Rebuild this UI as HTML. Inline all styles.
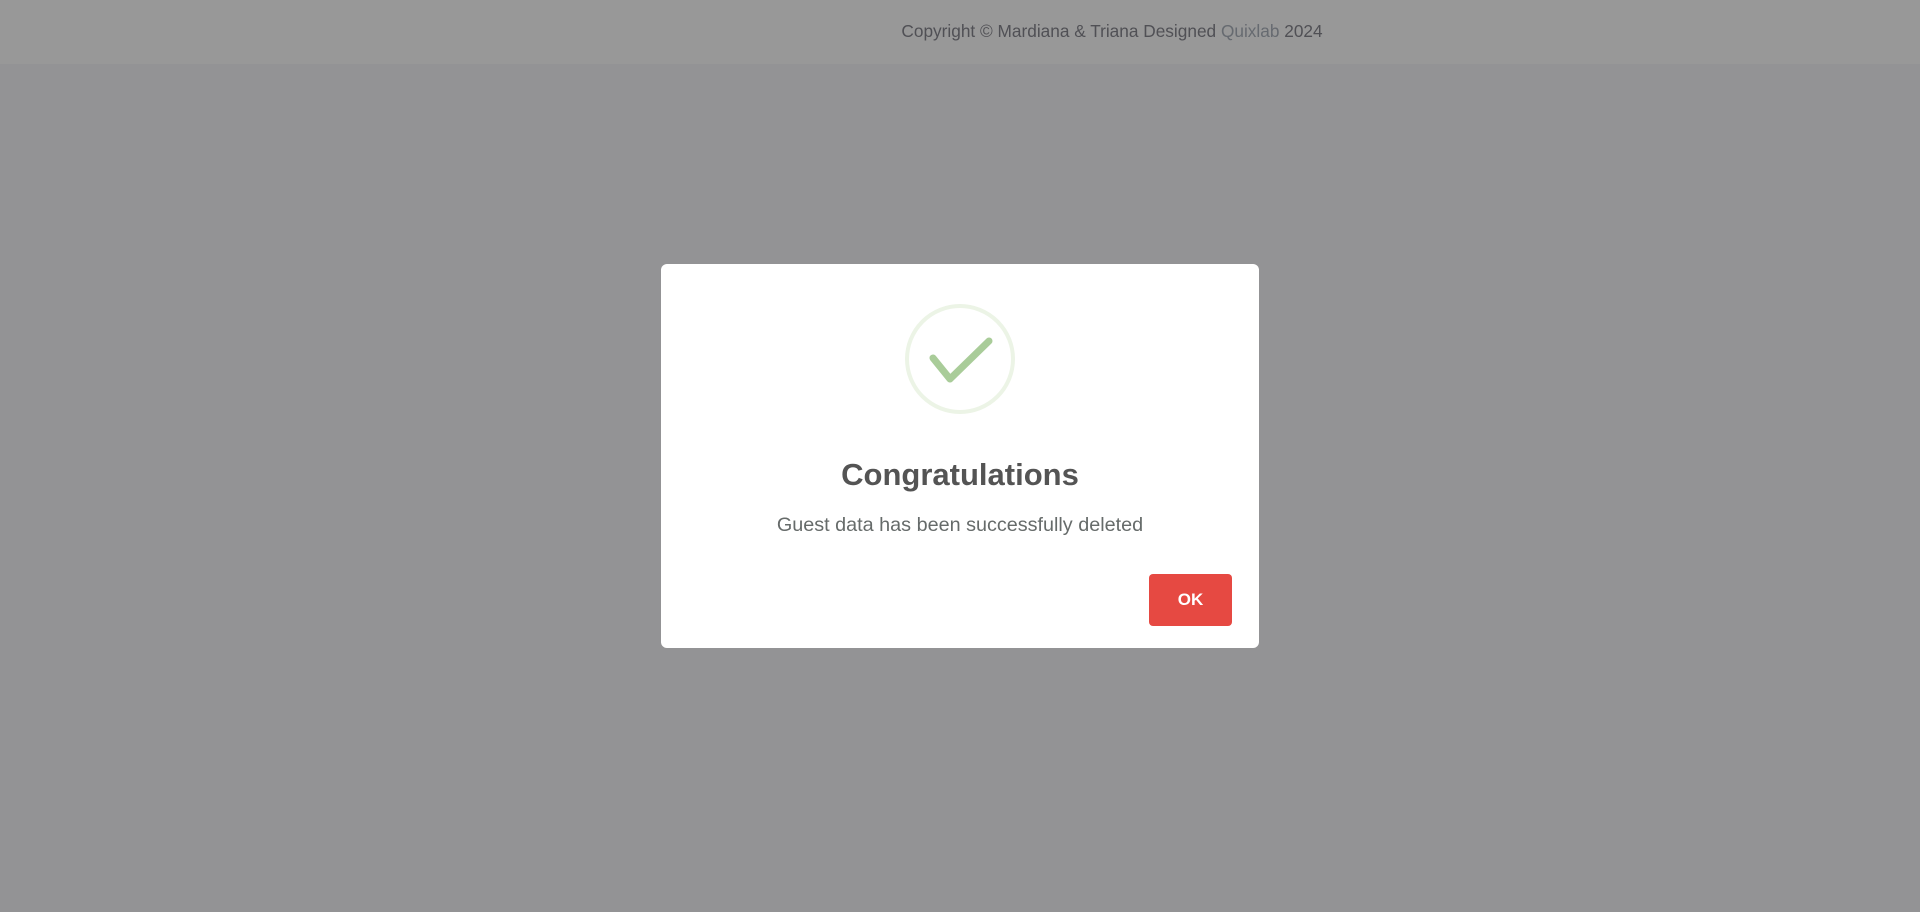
<!DOCTYPE html>
<html><head><style>
html,body{margin:0;padding:0;width:1920px;height:912px;overflow:hidden;background:#939395;font-family:"Liberation Sans",sans-serif;}
.top{position:absolute;left:0;top:0;width:1920px;height:64px;background:#989898;}
.top p{position:absolute;left:0;width:100%;margin:0;top:21px;text-align:center;padding-left:304px;box-sizing:border-box;font-size:17.25px;color:#505055;}
.top span{color:#666a70;}
.modal{position:absolute;left:661px;top:264px;width:598px;height:384px;background:#fff;border-radius:6px;}
.icon{position:absolute;left:244px;top:40px;width:102px;height:102px;border:4px solid #ecf4e6;border-radius:50%;}
h2{position:absolute;top:193px;left:0;width:100%;margin:0;text-align:center;font-size:31px;font-weight:bold;color:#545454;}
.msg{position:absolute;top:250px;left:0;width:100%;text-align:center;font-size:19.8px;color:#666b6a;}
.btn{position:absolute;left:488px;top:310px;width:83px;height:52px;background:#e64942;border-radius:4px;color:#fff;font-weight:bold;font-size:17px;text-align:center;line-height:52px;}
</style></head><body>
<div class="top"><p>Copyright © Mardiana &amp; Triana Designed <span>Quixlab</span> 2024</p></div>
<div class="modal">
<div class="icon"></div>
<svg style="position:absolute;left:244px;top:40px" width="110" height="110"><path d="M28 54 L45 75 L84 37" fill="none" stroke="#a9cc99" stroke-width="7" stroke-linecap="round" stroke-linejoin="round"/></svg>
<h2>Congratulations</h2>
<div class="msg">Guest data has been successfully deleted</div>
<div class="btn">OK</div>
</div>
</body></html>
